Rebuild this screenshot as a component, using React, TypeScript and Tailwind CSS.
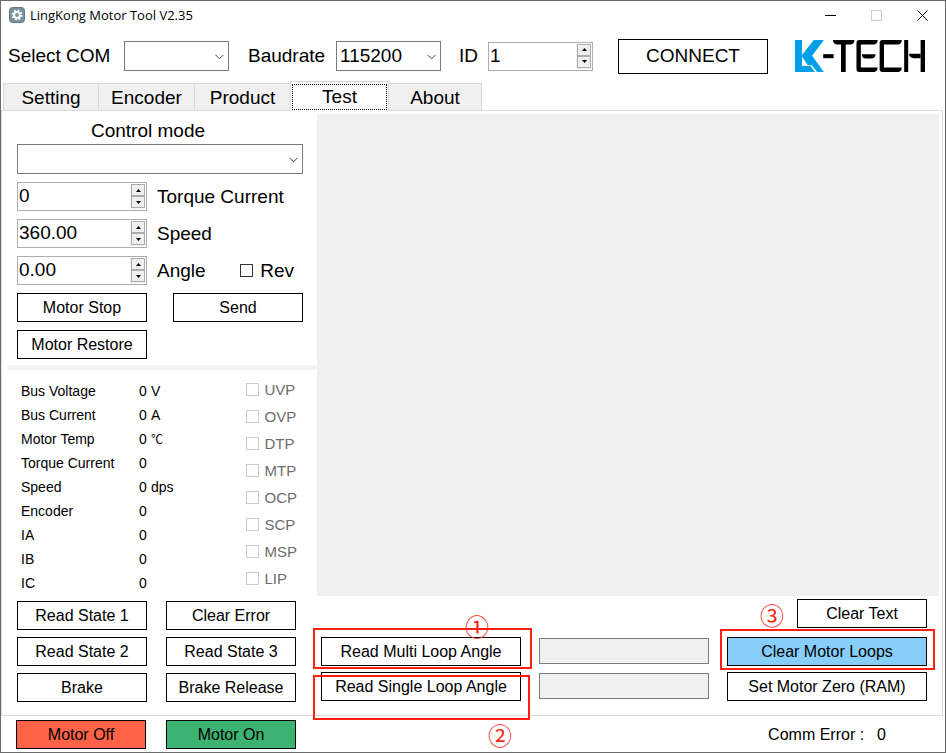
import { useId, useState } from 'react';
import type { ButtonHTMLAttributes, ReactNode } from 'react';

function GearIcon() {
  return (
    <svg viewBox="0 0 16 16" className="size-4 shrink-0" aria-hidden="true">
      <rect x="0.5" y="0.5" width="15" height="15" rx="3" fill="#78909a" stroke="#5f7a85" />
      <circle cx="8" cy="8" r="4.5" fill="none" stroke="#fff" strokeWidth="2" strokeDasharray="1.77 1.77" />
      <circle cx="8" cy="8" r="3" fill="none" stroke="#fff" strokeWidth="2" />
    </svg>
  );
}

function Logo() {
  return (
    <svg viewBox="0 0 387 95" className="h-8 w-[130px] shrink-0" role="img" aria-label="K-TECH">
      <g fill="#00a0e9">
        <path d="M0 0H21V77H46L60 95H0Z" />
        <path d="M56 0H86L51 47L86 95H66L50 75H38L19 47Z" />
      </g>
      <g fill="#000">
        <path d="M84 42H115V54H84Z" />
        <path d="M113 0H177Q176 13 166 13H151V95H137V13H124Q114 13 113 0Z" />
        <path d="M191 0H246Q245 13 236 13H196V82H246Q245 95 236 95H191Q183 95 183 86V9Q183 0 191 0Z" />
        <path d="M199 42H240Q238 55 228 55H210Q200 55 199 42Z" />
        <path d="M260 0H318Q317 13 308 13H265V82H318Q317 95 308 95H260Q252 95 252 86V9Q252 0 260 0Z" />
        <path d="M325 0H337V95H325ZM374 0H387V95H374Z" />
        <path d="M339 41H374V54H353Q341 54 339 41Z" />
      </g>
    </svg>
  );
}

function WindowButton({ label, children }: { label: string; children: ReactNode }) {
  return (
    <button type="button" aria-label={label} className="flex h-full w-[46px] items-center justify-center">
      <svg viewBox="0 0 11 11" className="size-[11px]" fill="none" shapeRendering="crispEdges">
        {children}
      </svg>
    </button>
  );
}

function Combo({ id, value, label, className }: { id: string; value: string; label?: string; className: string }) {
  return (
    <div className={`relative h-[30px] ${className}`}>
      <select
        id={id}
        aria-label={label}
        defaultValue={value}
        className="block h-full w-full appearance-none border border-[#7a7a7a] bg-white pl-[3px] text-[19px] leading-6 outline-none"
      >
        <option value={value}>{value}</option>
      </select>
      <svg viewBox="0 0 9 6" className="pointer-events-none absolute top-[13px] right-[5px] h-[6px] w-[9px]" fill="none" stroke="#444">
        <path d="M0.5 0.8L4.5 4.8L8.5 0.8" />
      </svg>
    </div>
  );
}

function Spinner({ id, initial, digits = 0, className }: { id: string; initial: number; digits?: number; className: string }) {
  const [value, setValue] = useState(initial.toFixed(digits));
  const step = (d: number) => setValue((v) => (Number(v) + d).toFixed(digits));
  return (
    <div className={`flex h-[29px] border border-[#abadb3] bg-white p-px ${className}`}>
      <input
        id={id}
        value={value}
        onChange={(e) => setValue(e.target.value)}
        className="min-w-0 flex-1 pb-px text-[19px] leading-6 outline-none"
      />
      <div className="flex w-[15px] flex-col bg-[#f0f0f0] pb-px pl-px">
        <button type="button" aria-label="Increase" onClick={() => step(1)} className="flex flex-1 items-center justify-center border border-[#acacac] bg-[#efefef]">
          <svg viewBox="0 0 5 3" className="h-[3px] w-[5px]"><path d="M0 3L2.5 0L5 3Z" /></svg>
        </button>
        <button type="button" aria-label="Decrease" onClick={() => step(-1)} className="flex flex-1 items-center justify-center border border-[#acacac] bg-[#efefef]">
          <svg viewBox="0 0 5 3" className="h-[3px] w-[5px]"><path d="M0 0L2.5 3L5 0Z" /></svg>
        </button>
      </div>
    </div>
  );
}

function Btn({ className = 'w-[130px] bg-white', ...rest }: ButtonHTMLAttributes<HTMLButtonElement>) {
  return <button type="button" className={`h-[29px] shrink-0 border border-black text-base leading-6 whitespace-nowrap ${className}`} {...rest} />;
}

function Marker({ box, num, children }: { box: string; num: string; children: string }) {
  return (
    <>
      <span className={`pointer-events-none absolute border-2 border-[#ff2010] ${box}`} />
      <span className={`pointer-events-none absolute font-['Noto_Sans_CJK_SC',sans-serif] text-2xl leading-6 text-[#ff2010] ${num}`}>{children}</span>
    </>
  );
}

const tabs = [
  { name: 'Setting', size: 'w-24' },
  { name: 'Encoder', size: 'w-[97px]' },
  { name: 'Product', size: 'w-[97px]' },
  { name: 'Test', size: 'w-[99px]' },
  { name: 'About', size: 'w-[94px]' },
];

const readings = [
  ['Bus Voltage', '0', 'V'],
  ['Bus Current', '0', 'A'],
  ['Motor Temp', '0', '℃'],
  ['Torque Current', '0', ''],
  ['Speed', '0', 'dps'],
  ['Encoder', '0', ''],
  ['IA', '0', ''],
  ['IB', '0', ''],
  ['IC', '0', ''],
];

const faults = ['UVP', 'OVP', 'DTP', 'MTP', 'OCP', 'SCP', 'MSP', 'LIP'];

const parameters = [
  { name: 'Torque Current', initial: 0, digits: 0 },
  { name: 'Speed', initial: 360, digits: 2 },
  { name: 'Angle', initial: 0, digits: 2 },
];

function ControlColumn() {
  const uid = useId();
  return (
    <div className="w-[315px] shrink-0 pb-[13px]">
      <div className="flex flex-col gap-2 pr-[14px] pl-[15px] text-[19px]">
        <div className="pt-2">
          <label htmlFor={`${uid}-mode`} className="block pt-px pr-6 pb-[2px] text-center leading-[22px]">Control mode</label>
          <Combo id={`${uid}-mode`} value="" className="w-full" />
        </div>
        {parameters.map((p) => (
          <div key={p.name} className="flex items-center">
            <Spinner id={`${uid}-${p.name}`} initial={p.initial} digits={p.digits} className="w-[130px]" />
            <label htmlFor={`${uid}-${p.name}`} className="ml-[10px] leading-6">{p.name}</label>
            {p.name === 'Angle' && (
              <label className="mr-[9px] ml-auto flex items-center gap-[7px] leading-6">
                <input type="checkbox" className="size-[13px] appearance-none border border-[#333] bg-white checked:bg-[#333]" />
                Rev
              </label>
            )}
          </div>
        ))}
        <div className="flex justify-between">
          <Btn>Motor Stop</Btn>
          <Btn>Send</Btn>
        </div>
        <Btn>Motor Restore</Btn>
      </div>
      <div className="mt-[6px] ml-[5px] h-[5px] bg-[#f4f4f4]" />
      <div className="flex justify-between pr-5 pl-[19px]">
        <table className="mt-[9px] h-[216px] text-[14px] leading-6">
          <tbody>
            {readings.map(([name, value, unit]) => (
              <tr key={name} className="h-6">
                <th scope="row" className="w-[118px] p-0 text-left font-normal">{name}</th>
                <td className="w-3 p-0">{value}</td>
                <td className={unit === '℃' ? "p-0 font-['Noto_Sans_CJK_SC',sans-serif] text-xs" : 'p-0'}>{unit}</td>
              </tr>
            ))}
          </tbody>
        </table>
        <div className="mt-[6px]">
          {faults.map((name) => (
            <label key={name} className="flex h-[27px] items-center gap-[5px] text-[15px] leading-6 text-[#6d6d6d]">
              <input type="checkbox" disabled className="size-[13px] appearance-none border border-[#ccc] bg-white" />
              {name}
            </label>
          ))}
        </div>
      </div>
      <div className="mt-[6px] grid grid-cols-[130px_130px] gap-x-[19px] gap-y-[7px] pl-[15px]">
        <Btn>Read State 1</Btn>
        <Btn>Clear Error</Btn>
        <Btn>Read State 2</Btn>
        <Btn>Read State 3</Btn>
        <Btn>Brake</Btn>
        <Btn>Brake Release</Btn>
      </div>
    </div>
  );
}

function LogColumn() {
  const field = 'mt-px h-[26px] min-w-0 flex-1 border border-[#7a7a7a] bg-[#f0f0f0] px-1 outline-none';
  return (
    <div className="flex min-w-0 flex-1 flex-col pt-[3px] pr-[3px] pb-[14px]">
      <textarea readOnly aria-label="Log output" className="block w-full flex-1 resize-none bg-[#f0f0f0] outline-none" />
      <div className="mt-[3px] flex justify-end pr-3">
        <Btn>Clear Text</Btn>
      </div>
      <div className="mt-[9px] flex items-start gap-[18px] pr-3 pl-1">
        <div className="relative flex">
          <Btn className="w-[200px] bg-white">Read Multi Loop Angle</Btn>
          <Marker box="-top-[9px] -left-[8px] h-[41px] w-[219px]" num="-top-[23px] left-[144px]">①</Marker>
        </div>
        <input readOnly aria-label="Multi loop angle" className={field} />
        <div className="relative flex">
          <Btn className="w-[200px] bg-[#87cefa]">Clear Motor Loops</Btn>
          <Marker box="-top-[8px] -left-[7px] h-[41px] w-[215px]" num="-top-[34px] left-[33px]">③</Marker>
        </div>
      </div>
      <div className="mt-[6px] flex items-start gap-[18px] pr-3 pl-1">
        <div className="relative flex">
          <Btn className="w-[200px] bg-white">Read Single Loop Angle</Btn>
          <Marker box="top-[3px] -left-[8px] h-[45px] w-[217px]" num="top-[51px] left-[167px]">②</Marker>
        </div>
        <input readOnly aria-label="Single loop angle" className={field} />
        <Btn className="w-[200px] bg-white">Set Motor Zero (RAM)</Btn>
      </div>
    </div>
  );
}

export default function App() {
  const uid = useId();
  return (
    <div className="flex min-h-screen flex-col border border-[#6b6b6b] bg-white font-['Liberation_Sans',Arial,sans-serif] text-black">
      <header className="flex h-7 items-center pl-2">
        <GearIcon />
        <h1 className="ml-[5px] flex-1 font-['Open_Sans',sans-serif] text-[13px] leading-5">LingKong Motor Tool V2.35</h1>
        <WindowButton label="Minimize"><path d="M0 5.5H11" stroke="#000" /></WindowButton>
        <WindowButton label="Maximize"><path d="M0.5 0.5H10.5V10.5H0.5Z" stroke="#ccc" /></WindowButton>
        <WindowButton label="Close"><path d="M0.5 0.5L10.5 10.5M10.5 0.5L0.5 10.5" stroke="#000" shapeRendering="auto" /></WindowButton>
      </header>

      <div className="mt-[2px] flex h-[50px] items-center pl-[7px] text-[19px] leading-[30px] whitespace-nowrap">
        <label htmlFor={`${uid}-com`} className="w-[116px]">Select COM</label>
        <Combo id={`${uid}-com`} value="" className="w-[105px]" />
        <label htmlFor={`${uid}-baud`} className="ml-[19px] w-[88px]">Baudrate</label>
        <Combo id={`${uid}-baud`} value="115200" className="w-[105px]" />
        <label htmlFor={`${uid}-id`} className="ml-[18px] w-[29px]">ID</label>
        <Spinner id={`${uid}-id`} initial={1} className="w-[105px]" />
        <button type="button" className="mr-[27px] ml-[25px] h-[35px] w-[150px] border border-black">CONNECT</button>
        <Logo />
      </div>

      <nav role="tablist" className="-mb-px flex items-end pl-[2px] text-[19px] leading-6">
        {tabs.map((t) =>
          t.name === 'Test' ? (
            <button key={t.name} type="button" role="tab" aria-selected="true" className={`relative -ml-px h-[30px] border border-b-0 border-[#dadada] bg-white p-px ${t.size}`}>
              <span className="block h-[26px] border border-dotted border-black leading-[23px]">{t.name}</span>
            </button>
          ) : (
            <button key={t.name} type="button" role="tab" aria-selected="false" className={`-ml-px h-7 border border-[#dadada] bg-[#f0f0f0] pt-px first:ml-0 ${t.size}`}>
              {t.name}
            </button>
          ),
        )}
      </nav>

      <main className="mr-[2px] flex flex-1 border border-[#dadada]">
        <ControlColumn />
        <LogColumn />
      </main>

      <footer className="flex items-start pt-1 pb-[3px] pl-[15px]">
        <Btn className="mr-5 w-[130px] bg-[#ff6347]">Motor Off</Btn>
        <Btn className="w-[130px] bg-[#3cb371]">Motor On</Btn>
        <p className="mr-[59px] ml-auto flex gap-[13px] text-base leading-[29px]">
          <span>Comm Error :</span>
          <span>0</span>
        </p>
      </footer>
    </div>
  );
}
